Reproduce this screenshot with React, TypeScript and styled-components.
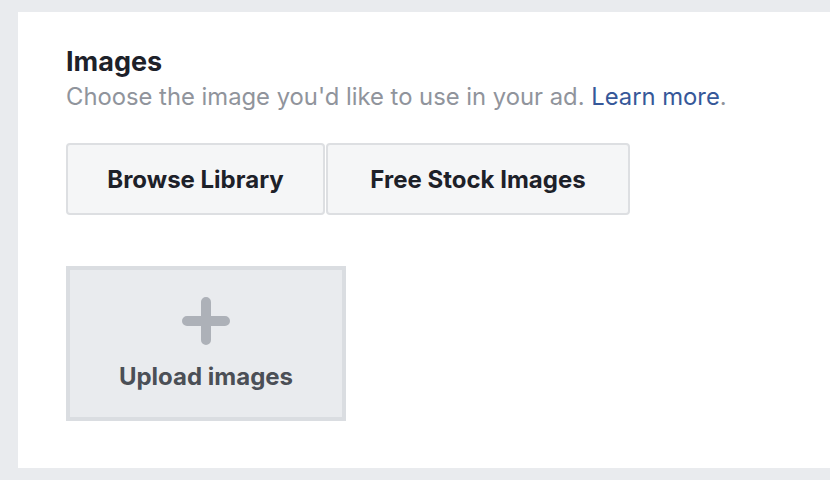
import styled, { createGlobalStyle } from "styled-components"

const GlobalStyle = createGlobalStyle`
    html, body {
        margin: 0;
        padding: 0;
        background: #e9ebee;
        overflow: hidden;
    }

    body {
        font-family: Inter, "Liberation Sans", Arial, sans-serif;
        -webkit-font-smoothing: antialiased;
    }
`

const Page = styled.div`
    width: 830px;
    height: 480px;
    padding: 12px 0 0 18px;
    box-sizing: border-box;
`

const Card = styled.section`
    width: 840px;
    height: 456px;
    background: #fff;
    box-sizing: border-box;
    padding: 34px 48px 0;
    display: flex;
    flex-direction: column;
`

const Title = styled.h2`
    margin: 0;
    font-size: 27px;
    line-height: 32px;
    font-weight: 700;
    color: #1d2129;
`

const Subtitle = styled.p`
    margin: 5px 0 0;
    font-size: 23.8px;
    line-height: 28px;
    color: #90949c;
`

const LearnMore = styled.a`
    color: #365899;
    text-decoration: none;
    cursor: pointer;
`

const ButtonRow = styled.div`
    display: flex;
    gap: 1px;
    margin-top: 32px;
`

const SourceButton = styled.button<{ $width: number }>`
    width: ${({ $width }) => $width}px;
    height: 72px;
    padding: 0;
    border: 2px solid #dddfe2;
    border-radius: 4px;
    background: #f5f6f7;
    font-family: inherit;
    font-size: 24px;
    font-weight: 700;
    color: #1d2129;
    cursor: pointer;
`

const UploadBox = styled.button`
    margin-top: 51px;
    width: 280px;
    height: 155px;
    border: 4px solid #dadde1;
    background: #e9ebee;
    box-sizing: border-box;
    display: flex;
    flex-direction: column;
    align-items: center;
    justify-content: center;
    gap: 18px;
    padding: 0;
    font-family: inherit;
    cursor: pointer;
`

const UploadLabel = styled.span`
    font-size: 24px;
    line-height: 28px;
    font-weight: 700;
    color: #4b4f56;
`

const PlusIcon = () => (
    <svg width="48" height="48" viewBox="0 0 48 48">
        <path d="M24 5v38M5 24h38" stroke="#adb1b8" strokeWidth="10" strokeLinecap="round" />
    </svg>
)

export default function App() {
    return (
        <>
            <GlobalStyle />
            <Page>
                <Card>
                    <Title>Images</Title>
                    <Subtitle>
                        Choose the image you'd like to use in your ad. <LearnMore>Learn more</LearnMore>.
                    </Subtitle>
                    <ButtonRow>
                        <SourceButton $width={259}>Browse Library</SourceButton>
                        <SourceButton $width={304}>Free Stock Images</SourceButton>
                    </ButtonRow>
                    <UploadBox>
                        <PlusIcon />
                        <UploadLabel>Upload images</UploadLabel>
                    </UploadBox>
                </Card>
            </Page>
        </>
    )
}
